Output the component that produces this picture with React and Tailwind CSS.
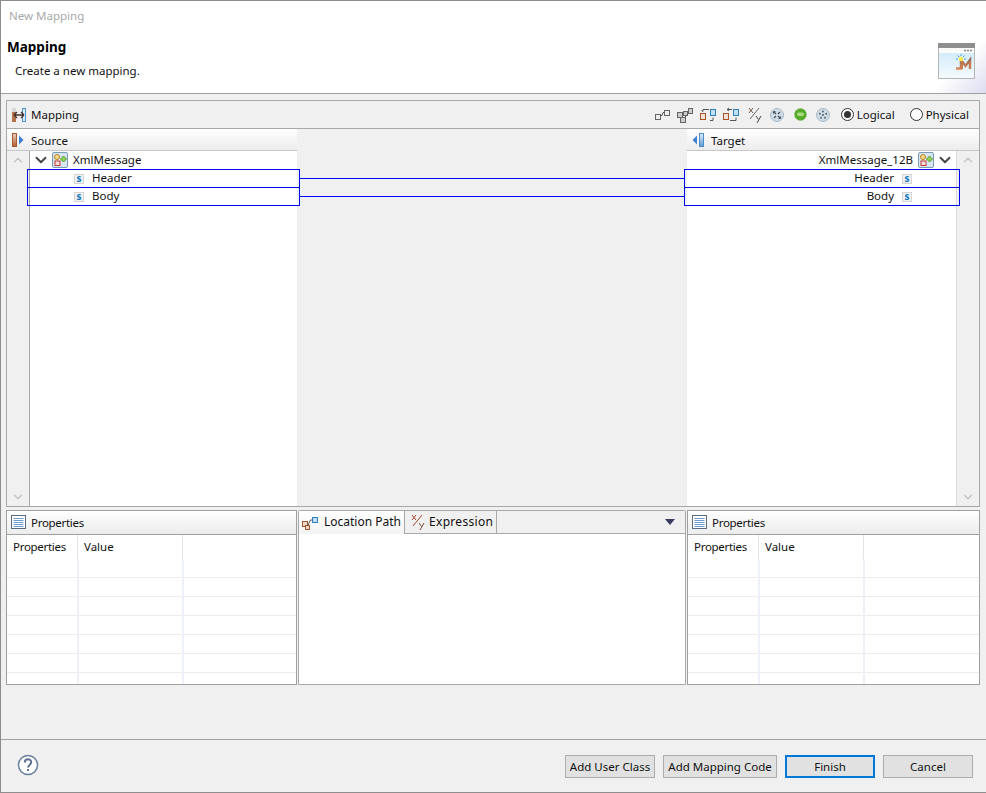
import { ChevronDown, ChevronUp } from 'lucide-react';

const Link = () => (
  <svg width="16" height="16" viewBox="0 0 16 16" fill="none">
    <rect x="1.5" y="7.5" width="5" height="5" fill="#eee" stroke="#666" />
    <rect x="10.5" y="3.5" width="5" height="5" fill="#eee" stroke="#666" />
    <path d="M6.5 8.5h1.500l1-3h1.500" stroke="#555" />
  </svg>
);

const LinkMany = () => (
  <svg width="16" height="16" viewBox="0 0 16 16" fill="none">
    <rect x="0.5" y="5.5" width="5" height="5" fill="#ccc" stroke="#666" />
    <rect x="3.5" y="10.5" width="5" height="5" fill="#ccc" stroke="#666" />
    <rect x="6.5" y="4.5" width="4" height="4" fill="#ccc" stroke="#666" />
    <rect x="11.5" y="1.5" width="4" height="5" fill="#ccc" stroke="#666" />
    <path d="M8 10l3-3" stroke="#555" />
  </svg>
);

const Swap = ({ flip }) => (
  <svg width="16" height="16" viewBox="0 0 16 16" fill="none">
    <rect x="0.5" y="6.5" width="5" height="6" fill="#f3e2d6" stroke="#a5552b" />
    <rect x="10.5" y="2.5" width="5" height="6" fill="#bfe0f6" stroke="#2f7fbe" />
    <path d={flip ? 'M3 4.500V2.500h6M3 4.500l-1.500-1M10 13.500h3v-3' : 'M4 2.500h5M4 2.500l2-1.500M4 2.500l2 1.500M7 13.500h6v-3'} stroke="#555" />
  </svg>
);

const XY = () => (
  <svg width="14" height="16" viewBox="0 0 14 16" fill="none">
    <path d="M1 1l4 5M5 1L1 6" stroke="#6b5a50" />
    <path d="M2 12L11 1" stroke="#666" />
    <path d="M8 9l2.500 3.500M13 9l-4 7" stroke="#444" />
  </svg>
);

const RoundIcon = ({ dots }) => (
  <svg width="14" height="14" viewBox="0 0 14 14" fill="none">
    <circle cx="7" cy="7" r="6.500" fill="#cfdde8" stroke="#a8b8c4" />
    {dots ? (
      <g fill="#54626e">
        <circle cx="7" cy="3.500" r="1" />
        <circle cx="3.800" cy="5.800" r="1" />
        <circle cx="10.200" cy="5.800" r="1" />
        <circle cx="7" cy="7" r="1" />
        <circle cx="5" cy="9.800" r="1" />
        <circle cx="9" cy="9.800" r="1" />
      </g>
    ) : (
      <path d="M4 4l2 2M10 4L8 6M4 10l2-2M10 10L8 8M3.500 3.500h2M3.500 3.500v2M10.500 10.500h-2M10.500 10.500v-2" stroke="#46525c" strokeWidth="1.200" />
    )}
  </svg>
);

const GreenDot = () => (
  <svg width="13" height="13" viewBox="0 0 13 13">
    <circle cx="6.500" cy="6.500" r="6" fill="#57ab2a" stroke="#7fb565" strokeWidth="0.500" />
    <rect x="3" y="4.500" width="7" height="3.500" rx="1.700" fill="#a9dc82" />
  </svg>
);

const MappingIcon = () => (
  <svg width="16" height="16" viewBox="0 0 16 16">
    <rect x="1" y="1" width="4" height="14" fill="#b4714c" />
    <rect x="1" y="1" width="4" height="4" fill="#d8d8d8" />
    <rect x="11" y="1" width="4" height="14" fill="#4d97d4" />
    <rect x="12" y="2" width="2" height="12" fill="#dcebf7" />
    <path d="M3 8h10M3 8l3-3M3 8l3 3M13 8l-3-3M13 8l-3 3" stroke="#43312a" strokeWidth="1.300" fill="none" />
  </svg>
);

const SourceIcon = () => (
  <svg width="14" height="16" viewBox="0 0 14 16">
    <defs>
      <linearGradient id="srcBar" x1="0" y1="0" x2="0" y2="1">
        <stop offset="0" stopColor="#e8d2c4" />
        <stop offset="1" stopColor="#b45f30" />
      </linearGradient>
    </defs>
    <rect x="0.500" y="1.500" width="4" height="13" fill="url(#srcBar)" stroke="#a65a32" />
    <path d="M7 3.500l4.500 4.500L7 12.500z" fill="#3f7fd0" />
  </svg>
);

const TargetIcon = () => (
  <svg width="14" height="16" viewBox="0 0 14 16">
    <defs>
      <linearGradient id="tgtBar" x1="0" y1="0" x2="0" y2="1">
        <stop offset="0" stopColor="#e4eef8" />
        <stop offset="1" stopColor="#5b9bd5" />
      </linearGradient>
    </defs>
    <path d="M5 3.500L0.500 8 5 12.500z" fill="#3f7fd0" />
    <rect x="7.500" y="1.500" width="4" height="13" fill="url(#tgtBar)" stroke="#4d8ccb" />
  </svg>
);

const ElementIcon = () => (
  <svg width="16" height="16" viewBox="0 0 16 16" className="shrink-0">
    <rect x="0.500" y="0.500" width="15" height="15" rx="1.500" fill="#d7e6f2" stroke="#7d9bb3" />
    <circle cx="5" cy="5" r="2.500" fill="#f5d98a" stroke="#b8861e" />
    <rect x="3" y="9" width="5" height="4.500" fill="#fbdede" stroke="#c0392b" />
    <path d="M11.500 4l3 3-3 3-3-3z" fill="#8fd05a" stroke="#5a9e2c" />
  </svg>
);

const SIcon = () => (
  <span className="flex h-[10px] w-[10px] shrink-0 items-center justify-center border border-[#d4d4d4] bg-[#f2f2f2] pb-[1px] text-[10px] leading-none font-bold text-[#0f78bd]">
    s
  </span>
);

const TableIcon = () => (
  <svg width="15" height="15" viewBox="0 0 15 15" fill="none">
    <rect x="0.500" y="0.500" width="14" height="13" fill="#fff" stroke="#5b6b80" />
    <path d="M2.500 3.500h10M2.500 5.500h10M2.500 7.500h10M2.500 9.500h10M2.500 11.500h10" stroke="#6d9bd0" />
  </svg>
);

const HeaderIcon = () => (
  <svg width="37" height="37" viewBox="0 0 37 37" fill="none">
    <defs>
      <linearGradient id="winBody" x1="0" y1="0" x2="0" y2="1">
        <stop offset="0" stopColor="#d4ecfa" />
        <stop offset="1" stopColor="#f4fafd" />
      </linearGradient>
      <linearGradient id="mFill" x1="0" y1="0" x2="0" y2="1">
        <stop offset="0" stopColor="#8f6a55" />
        <stop offset="1" stopColor="#dc8a5e" />
      </linearGradient>
    </defs>
    <rect x="0.500" y="0.500" width="36" height="35" fill="#f4f4f4" stroke="#b5b5b5" />
    <rect x="0" y="0" width="37" height="5" fill="#8f8f8f" />
    <rect x="1" y="5" width="35" height="5" fill="#fafafa" />
    <path d="M26 7.500h2M29 7.500h2M32 7.500h2" stroke="#888" strokeWidth="1.500" />
    <rect x="1" y="10" width="35" height="25" fill="url(#winBody)" />
    <path d="M18 25.500h5V17l4.500 6 4.500-6v9" stroke="url(#mFill)" strokeWidth="2.500" />
    <path d="M32 18v8M24 18v8" stroke="#c87a50" strokeWidth="2" />
    <circle cx="23" cy="16" r="2.300" fill="#ffe94a" />
    <path d="M23 11v2M18 16h2M26 16h2M19.500 12.500l1.500 1.500M26.500 12.500L25 14" stroke="#3a9fe0" />
  </svg>
);

const LocationIcon = () => (
  <svg width="16" height="16" viewBox="0 0 16 16" fill="none">
    <rect x="0.500" y="6.500" width="5" height="5" fill="#f3d9c8" stroke="#a5552b" />
    <rect x="3.500" y="10.500" width="4" height="4" fill="#f3d9c8" stroke="#a5552b" />
    <rect x="10.500" y="2.500" width="5" height="5" fill="#bfe0f6" stroke="#2f7fbe" />
    <path d="M5.500 11l3-6h2" stroke="#555" />
  </svg>
);

const ExprIcon = () => (
  <svg width="14" height="16" viewBox="0 0 14 16" fill="none">
    <path d="M1 1l4 5M5 1L1 6" stroke="#a5482b" />
    <path d="M2 12L11 1" stroke="#a5482b" />
    <path d="M8 9l2.500 3.500M13 9l-4 7" stroke="#7a4a35" />
  </svg>
);

const Radio = ({ checked, label }) => (
  <div className="flex items-center gap-[3px]">
    <span className="flex h-[13px] w-[13px] items-center justify-center rounded-full border border-[#333] bg-white">
      {checked && <span className="h-[7px] w-[7px] rounded-full bg-[#333]" />}
    </span>
    <span>{label}</span>
  </div>
);

const PaneHeader = ({ icon, label, height, inset, labelClass }) => (
  <div className={`flex items-center gap-[5px] bg-gradient-to-b from-white to-[#ececec] ${height} ${inset}`}>
    {icon}
    <span className={labelClass}>{label}</span>
  </div>
);

const Scrollbar = ({ className }) => (
  <div className={`flex w-[23px] shrink-0 flex-col items-center justify-between bg-[#f0f0f0] py-[2px] text-[#c4c4c4] ${className}`}>
    <ChevronUp size={14} strokeWidth={2.500} />
    <ChevronDown size={14} strokeWidth={2.500} />
  </div>
);

const PropertiesPanel = () => (
  <div className="flex h-[175px] flex-col border border-[#a0a0a0] bg-white">
    <div className="border-b border-[#a0a0a0]">
      <PaneHeader
        icon={<TableIcon />}
        label="Properties"
        height="h-[23px]"
        inset="pl-[4px]"
        labelClass="pt-[1px] tracking-[-0.3px]"
      />
    </div>
    <div className="flex h-[24px] shrink-0 leading-[24px]">
      <div className="w-[71px] border-r border-[#e4e4e4] pl-[6px] tracking-[-0.3px]">Properties</div>
      <div className="w-[105px] border-r border-[#e4e4e4] pl-[6px]">Value</div>
    </div>
    <div className="relative flex-1 overflow-hidden">
      {[0, 1, 2, 3, 4, 5].map((i) => (
        <div key={i} className="h-[19px] border-b border-[#ececec]" />
      ))}
      <div className="absolute top-0 bottom-0 left-[70px] w-[2px] bg-[#eef1f7]" />
      <div className="absolute top-0 bottom-0 left-[175px] w-[2px] bg-[#eef1f7]" />
    </div>
  </div>
);

const Btn = ({ label, primary, width }) => (
  <button
    type="button"
    className={`flex h-[23px] items-center justify-center bg-[#e1e1e1] ${width} ${
      primary ? 'border-2 border-[#0078d7]' : 'border border-[#adadad]'
    }`}
  >
    {label}
  </button>
);

export default function App() {
  return (
    <div className="flex h-[793px] w-[986px] flex-col overflow-hidden border-t border-b border-l border-[#8d8d8d] bg-[#f0f0f0] font-['Noto_Sans','Liberation_Sans',sans-serif] text-[11.5px] leading-none text-[#111]">
      <header className="relative h-[93px] shrink-0 border-b border-[#a0a0a0] bg-white pl-[6px]">
        <div className="pt-[9px] pl-[2px] text-[#a8a8a8]">New Mapping</div>
        <div className="pt-[19px] text-[13.5px] font-bold text-black">Mapping</div>
        <div className="pt-[11px] pl-[8px]">Create a new mapping.</div>
        <div className="absolute top-[36px] right-0 h-[56px] w-[55px] bg-gradient-to-br from-white via-white to-[#dcdcf0]" />
        <div className="absolute top-[42px] right-[11px]">
          <HeaderIcon />
        </div>
      </header>

      <main className="flex-1 pt-[6px] pr-[6px] pl-[5px]">
        <section className="relative flex h-[407px] flex-col border border-[#a8a8a8]">
          <div className="flex h-[28px] shrink-0 items-center border-b border-[#a8a8a8] pl-[4px]">
            <MappingIcon />
            <span className="ml-[4px]">Mapping</span>
            <div className="ml-auto flex items-center gap-[7px] pr-[10px]">
              <Link />
              <LinkMany />
              <Swap flip />
              <Swap />
              <span className="ml-[2px]"><XY /></span>
              <span className="ml-[1px]"><RoundIcon /></span>
              <span className="ml-[3px]"><GreenDot /></span>
              <span className="ml-[2px]"><RoundIcon dots /></span>
              <span className="ml-[4px]"><Radio checked label="Logical" /></span>
              <span className="ml-[8px]"><Radio label="Physical" /></span>
            </div>
          </div>

          <div className="flex min-h-0 flex-1">
            <div className="flex w-[290px] shrink-0 flex-col">
              <PaneHeader icon={<SourceIcon />} label="Source" height="h-[21px]" inset="pl-[5px]" labelClass="pt-[3px]" />
              <div className="flex flex-1 border-t border-[#c8c8c8]">
                <Scrollbar className="border-r border-[#a8a8a8]" />
                <div className="flex-1 bg-white">
                  <div className="flex h-[18px] items-center pl-[2px]">
                    <ChevronDown size={18} strokeWidth={2.500} className="text-[#444]" />
                    <span className="ml-[2px]"><ElementIcon /></span>
                    <span className="ml-[5px]">XmlMessage</span>
                  </div>
                </div>
              </div>
            </div>

            <div className="flex-1" />

            <div className="flex w-[292px] shrink-0 flex-col">
              <PaneHeader icon={<TargetIcon />} label="Target" height="h-[21px]" inset="pl-[5px]" labelClass="pt-[3px]" />
              <div className="flex flex-1 border-t border-[#c8c8c8]">
                <div className="flex-1 bg-white">
                  <div className="flex h-[18px] items-center justify-end pr-[2px]">
                    <span className="mr-[5px]">XmlMessage_12B</span>
                    <ElementIcon />
                    <ChevronDown size={18} strokeWidth={2.500} className="ml-[2px] text-[#444]" />
                  </div>
                </div>
                <Scrollbar className="border-l border-[#d8d8d8]" />
              </div>
            </div>
          </div>

          {/* mapped rows sit over the panes and join across the middle */}
          <div className="absolute top-[68px] left-[20px] flex w-[933px]">
            <div className="w-[273px] shrink-0">
              <div className="flex h-[19px] items-center border border-[#0000ee] pl-[46px]">
                <SIcon />
                <span className="ml-[8px] pb-[1px]">Header</span>
              </div>
              <div className="-mt-px flex h-[19px] items-center border border-[#0000ee] pl-[46px]">
                <SIcon />
                <span className="ml-[8px] pb-[1px]">Body</span>
              </div>
            </div>
            <div className="flex flex-1 flex-col">
              <div className="h-[10px] border-b border-[#0000ff]" />
              <div className="h-[18px] border-b border-[#0000ff]" />
            </div>
            <div className="w-[276px] shrink-0">
              <div className="flex h-[19px] items-center justify-end border border-[#0000ee] pr-[47px]">
                <span className="mr-[8px] pb-[1px]">Header</span>
                <SIcon />
              </div>
              <div className="-mt-px flex h-[19px] items-center justify-end border border-[#0000ee] pr-[47px]">
                <span className="mr-[8px] pb-[1px]">Body</span>
                <SIcon />
              </div>
            </div>
          </div>
        </section>

        <div className="mt-[3px] grid grid-cols-[291px_388px_293px] gap-[1px]">
          <PropertiesPanel />
          <div className="flex h-[175px] flex-col rounded-tl-[2px] rounded-tr-[2px] border border-[#a8a8a8] bg-white">
            <div className="flex h-[23px] shrink-0 bg-[#f0f0f0] text-[12px]">
              <div className="flex h-[23px] items-center gap-[6px] border-r border-[#a8a8a8] bg-gradient-to-b from-white to-[#f4f4f4] px-[3px]">
                <LocationIcon />
                <span className="pb-[1px]">Location Path</span>
              </div>
              <div className="flex items-center gap-[4px] border-r border-b border-[#a8a8a8] pr-[3px] pl-[6px] tracking-[0.3px]">
                <ExprIcon />
                <span className="pb-[1px]">Expression</span>
              </div>
              <div className="flex flex-1 items-center justify-end border-b border-[#a8a8a8] pr-[10px]">
                <span className="h-0 w-0 border-t-[6px] border-r-[5px] border-l-[5px] border-t-[#3c3c5e] border-r-transparent border-l-transparent" />
              </div>
            </div>
          </div>
          <PropertiesPanel />
        </div>
      </main>

      <footer className="flex h-[53px] shrink-0 items-start border-t border-[#a0a0a0] pt-[15px] pr-[13px] pl-[16px]">
        <svg width="22" height="22" viewBox="0 0 22 22" fill="none" className="-mt-[1px]">
          <circle cx="11" cy="11" r="9.500" stroke="#6b7f9c" strokeWidth="1.500" fill="#fff" />
          <path d="M7.800 8.500c0-4.200 6.400-4.200 6.400-.2 0 2.500-3.200 2.700-3.200 5.200" stroke="#5f7390" strokeWidth="2" />
          <rect x="10" y="15" width="2" height="2" fill="#5f7390" />
        </svg>
        <div className="ml-auto flex gap-[8px]">
          <Btn label="Add User Class" width="w-[90px]" />
          <Btn label="Add Mapping Code" width="w-[114px]" />
          <Btn label="Finish" primary width="w-[90px]" />
          <Btn label="Cancel" width="w-[90px]" />
        </div>
      </footer>
    </div>
  );
}
